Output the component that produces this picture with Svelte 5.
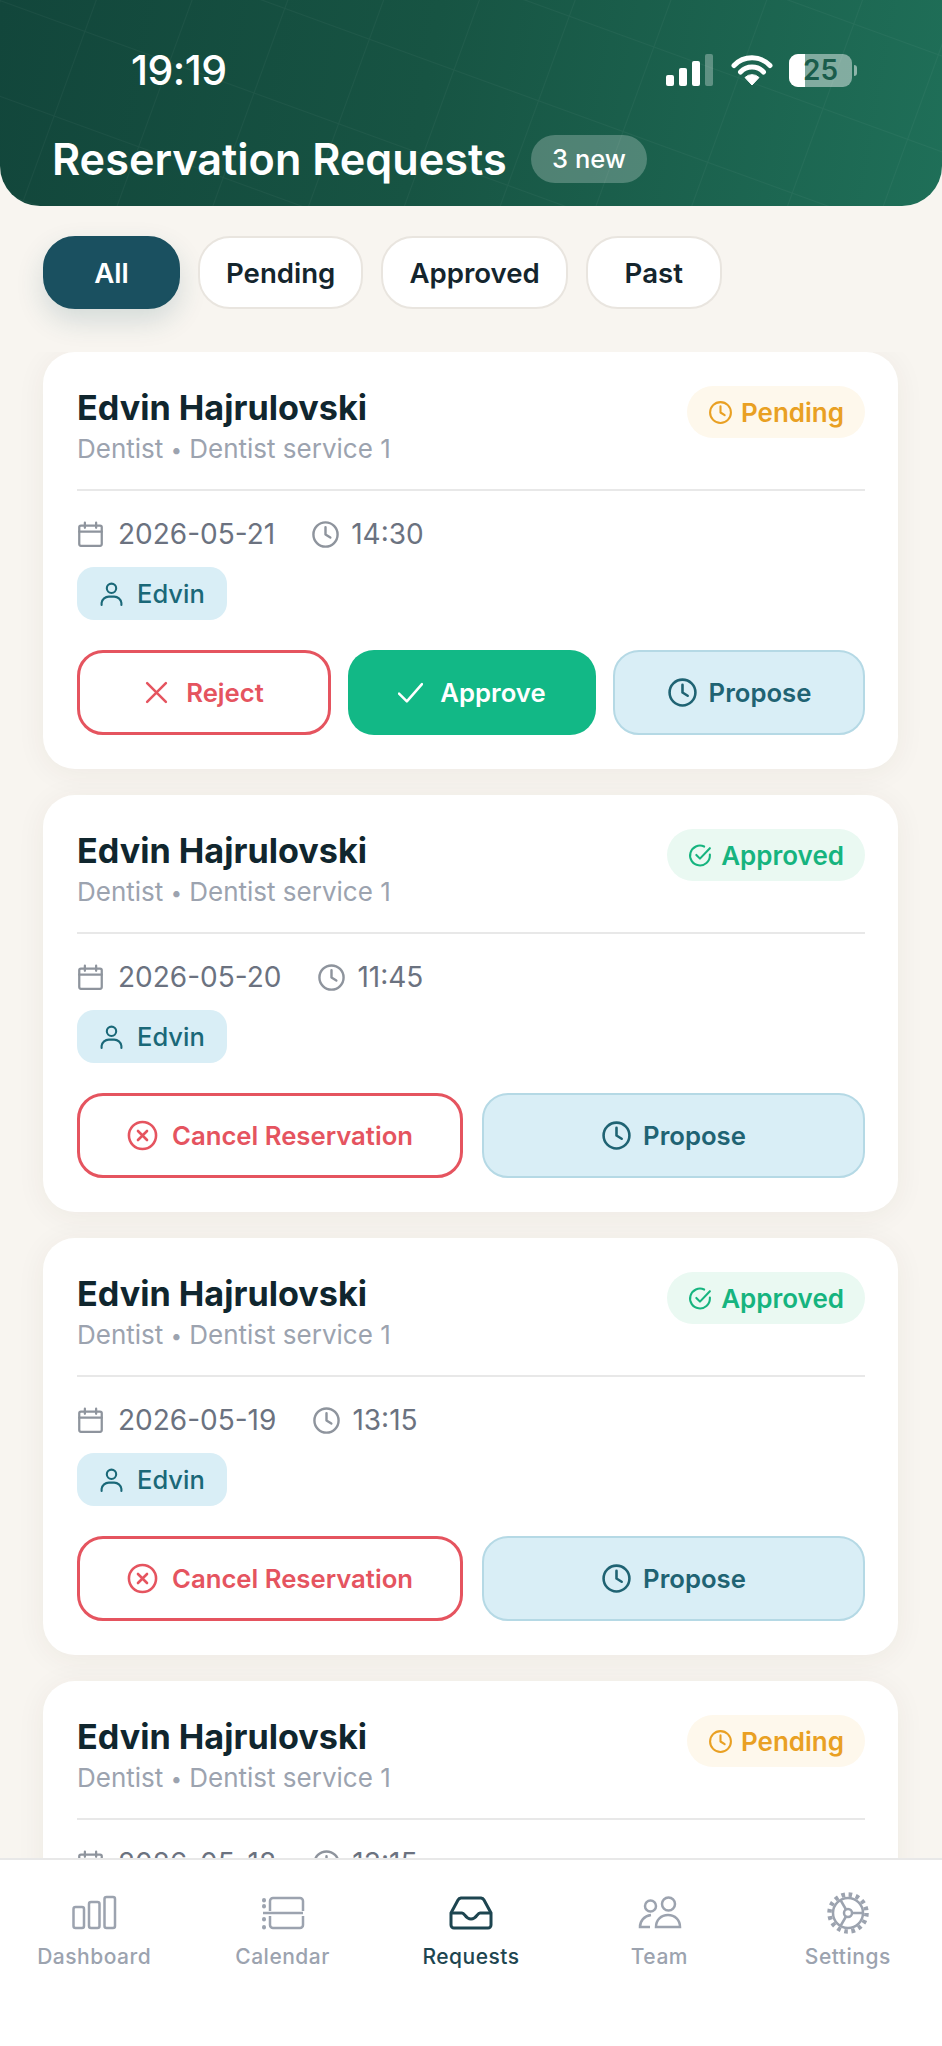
<script>
  const filters = ['All', 'Pending', 'Approved', 'Past'];

  const requests = [
    { status: 'Pending', date: '2026-05-21', time: '14:30' },
    { status: 'Approved', date: '2026-05-20', time: '11:45' },
    { status: 'Approved', date: '2026-05-19', time: '13:15' },
    { status: 'Pending', date: '2026-05-18', time: '13:15' }
  ];

  const tabs = ['Dashboard', 'Calendar', 'Requests', 'Team', 'Settings'];
</script>

{#snippet clock()}
  <svg class="ico" viewBox="0 0 24 24"><circle cx="12" cy="12" r="10" /><path d="M12 6v6l4 2.5" /></svg>
{/snippet}

<div class="screen">
  <header class="top">
    <svg class="grid" width="100%" height="100%">
      <defs>
        <pattern id="lines" width="90" height="90" patternUnits="userSpaceOnUse" patternTransform="rotate(20)">
          <path d="M0 0V90M0 0H90" fill="none" stroke="#fff" stroke-opacity="0.04" stroke-width="2" />
        </pattern>
      </defs>
      <rect width="100%" height="100%" fill="url(#lines)" />
    </svg>
    <div class="status">
      <span class="clocktime">19:19</span>
      <div class="status-icons">
        <svg width="48" height="32" viewBox="0 0 48 32">
          <rect x="0" y="21" width="8" height="11" rx="2" fill="#fff" />
          <rect x="13" y="14" width="8" height="18" rx="2" fill="#fff" />
          <rect x="26" y="7" width="8" height="25" rx="2" fill="#fff" />
          <rect x="39" y="0" width="8" height="32" rx="2" fill="#fff" fill-opacity="0.3" />
        </svg>
        <svg width="42" height="32" viewBox="0 0 42 32">
          <path d="M3 11.5a25 25 0 0 1 36 0M9.5 18a16 16 0 0 1 23 0" fill="none" stroke="#fff" stroke-width="5" stroke-linecap="round" />
          <path d="M21 31l-7-7.5a10 10 0 0 1 14 0z" fill="#fff" stroke="#fff" stroke-linejoin="round" />
        </svg>
        <div class="battery">
          <div class="cell"><i></i><span>25</span></div>
          <b></b>
        </div>
      </div>
    </div>
    <div class="title-row">
      <h1>Reservation Requests</h1>
      <span class="new">3 new</span>
    </div>
  </header>

  <div class="filters">
    {#each filters as f, i}
      <button class="pill" class:on={i === 0}>{f}</button>
    {/each}
  </div>

  <div class="list">
    {#each requests as r}
      <article class="card">
        <div class="card-head">
          <div>
            <h2>Edvin Hajrulovski</h2>
            <p>Dentist <span class="dot">•</span> Dentist service 1</p>
          </div>
          <span class="badge {r.status.toLowerCase()}">
            {#if r.status === 'Pending'}
              {@render clock()}
            {:else}
              <svg class="ico" viewBox="0 0 24 24"><path d="M21 11v1a9.5 9.5 0 1 1-5.5-8.6" /><path d="M8 11.5l3.5 3.5L21 5" /></svg>
            {/if}
            {r.status}
          </span>
        </div>
        <div class="meta">
          <svg class="ico cal" viewBox="0 0 24 24"><rect x="2" y="4" width="20" height="18" rx="1.5" /><path d="M2 9.5h20M7 1.5V6M17 1.5V6" /></svg>
          <span class="date">{r.date}</span>
          <span class="time-ico">{@render clock()}</span>
          <span>{r.time}</span>
        </div>
        <span class="tag">
          <svg class="ico" viewBox="0 0 24 24"><circle cx="12" cy="7" r="4.5" /><path d="M2.5 23v-2a7 7 0 0 1 7-6h5a7 7 0 0 1 7 6v2" /></svg>
          Edvin
        </span>
        <div class="actions" class:two={r.status === 'Approved'}>
          {#if r.status === 'Pending'}
            <button class="btn danger wide">
              <svg class="ico small" viewBox="0 0 24 24"><path d="M3 3l18 18M21 3L3 21" /></svg>
              Reject
            </button>
            <button class="btn ok wide">
              <svg class="ico small" viewBox="0 0 24 24"><path d="M1 13l7.5 7.500L23 4" /></svg>
              Approve
            </button>
          {:else}
            <button class="btn danger">
              <svg class="ico" viewBox="0 0 24 24"><circle cx="12" cy="12" r="10.5" /><path d="M8.5 8.5l7 7M15.5 8.5l-7 7" /></svg>
              Cancel Reservation
            </button>
          {/if}
          <button class="btn soft">{@render clock()} Propose</button>
        </div>
      </article>
    {/each}
  </div>

  <nav class="tabs">
    {#each tabs as t, i}
      <div class="tab" class:active={i === 2}>
        <svg class="tab-ico" viewBox="0 0 44 44">
          {#if i === 0}
            <rect x="1.500" y="15" width="10.500" height="21" rx="2" /><rect x="17" y="10" width="10.500" height="26" rx="2" /><rect x="32.500" y="5" width="10.500" height="31" rx="2" />
          {:else if i === 1}
            <path d="M9 19V9a3 3 0 0 1 3-3h27a3 3 0 0 1 3 3v10M9 24v9a3 3 0 0 0 3 3h27a3 3 0 0 0 3-3v-9M2 21h40" />
            <path d="M3 8v.5M3 14v.5M3 27v.5M3 35v.5" stroke-width="4" stroke-linecap="round" />
          {:else if i === 2}
            <path d="M2 21L9 8a4 4 0 0 1 3-2h20a4 4 0 0 1 3 2l7 13v12a3 3 0 0 1-3 3H5a3 3 0 0 1-3-3z" />
            <path d="M2 21h11c3 0 3 6 9 6s6-6 9-6h11" />
          {:else if i === 3}
            <circle cx="13.500" cy="14" r="5.500" /><circle cx="31.500" cy="12" r="6.500" />
            <path d="M13 35H3c0-6 4-11 11-12M19 35c0-7 5-12 12-12s12 5 12 12z" />
          {:else}
            <circle cx="22" cy="21" r="15" />
            <circle cx="22" cy="21" r="18.500" class="teeth" />
            <circle cx="22" cy="21" r="4" />
            <path d="M26 21h11M20 24.500l-5.500 9.500M20 17.500l-5.500-9.500" />
          {/if}
        </svg>
        <span>{t}</span>
      </div>
    {/each}
  </nav>
</div>

<style>
  :global(body) {
    background: #f8f5f0;
    font-family: Inter, "Liberation Sans", sans-serif;
  }

  .screen {
    width: 942px;
    height: 2046px;
    display: flex;
    flex-direction: column;
    overflow: hidden;
    background: #f8f5f0;
  }

  .top {
    position: relative;
    height: 206px;
    flex: none;
    box-sizing: border-box;
    padding: 50px 52px 0;
    color: #fff;
    background: linear-gradient(100deg, #12463b 0%, #175443 45%, #1f6f58 100%);
    border-radius: 0 0 40px 40px;
    overflow: hidden;
  }

  .grid {
    position: absolute;
    inset: 0;
  }

  .status {
    position: relative;
    display: flex;
    justify-content: space-between;
    align-items: center;
    height: 40px;
    padding-left: 79px;
  }

  .clocktime {
    font-size: 41px;
    font-weight: 500;
    letter-spacing: -0.5px;
  }

  .status-icons {
    display: flex;
    align-items: center;
    gap: 17px;
    margin-right: 33px;
  }

  .battery {
    display: flex;
    align-items: center;
    gap: 2px;
    margin-left: -1px;
  }

  .cell {
    position: relative;
    width: 63px;
    height: 33px;
    border-radius: 9px;
    overflow: hidden;
    background: rgba(255, 255, 255, 0.45);
    color: #1a5c4b;
    font-size: 28px;
    font-weight: 600;
    text-align: center;
    line-height: 33px;
  }

  .cell i {
    position: absolute;
    left: 0;
    top: 0;
    bottom: 0;
    width: 16px;
    background: #fff;
  }

  .cell span {
    position: relative;
  }

  .battery b {
    width: 3px;
    height: 11px;
    border-radius: 0 3px 3px 0;
    background: rgba(255, 255, 255, 0.5);
  }

  .title-row {
    position: relative;
    display: flex;
    align-items: center;
    gap: 24px;
    margin-top: 44px;
  }

  h1 {
    margin: 0;
    font-size: 43.200px;
    font-weight: 600;
    line-height: 50px;
  }

  .new {
    height: 48px;
    padding: 0 21.500px;
    border-radius: 24px;
    background: rgba(255, 255, 255, 0.24);
    font-size: 25.500px;
    font-weight: 500;
    line-height: 48px;
  }

  .filters {
    display: flex;
    gap: 18px;
    padding: 30px 43px 43px;
    flex: none;
  }

  .pill {
    height: 73px;
    min-width: 136px;
    padding: 0 26px;
    border: 2px solid #e9e5df;
    border-radius: 32px;
    background: #fff;
    color: #14252d;
    font: 600 27.600px Inter, "Liberation Sans", sans-serif;
  }

  .pill.on {
    min-width: 137px;
    border-color: #1a5060;
    background: #1a5060;
    color: #fff;
    box-shadow: 0 12px 28px rgba(26, 80, 96, 0.16);
  }

  .list {
    flex: 1;
    min-height: 0;
    overflow: hidden;
    display: flex;
    flex-direction: column;
    gap: 26px;
    padding: 0 44px 0 43px;
  }

  .card {
    flex: none;
    height: 417px;
    box-sizing: border-box;
    padding: 34px 33px 33px 34px;
    display: flex;
    flex-direction: column;
    align-items: flex-start;
    background: #fff;
    border-radius: 32px;
    box-shadow: 0 4px 30px rgba(60, 50, 30, 0.06);
  }

  .card-head {
    width: 100%;
    height: 103px;
    flex: none;
    display: flex;
    justify-content: space-between;
    align-items: flex-start;
    border-bottom: 2px solid #e8e8e8;
  }

  h2 {
    margin: 0;
    color: #10262e;
    font-size: 34.200px;
    font-weight: 700;
    line-height: 44px;
  }

  .card-head p {
    margin: 0;
    color: #9ca3af;
    font-size: 26px;
    line-height: 38px;
  }

  .dot {
    font-size: 20px;
    vertical-align: 1px;
  }

  .badge {
    display: flex;
    align-items: center;
    gap: 8px;
    height: 52px;
    padding: 0 21px;
    border-radius: 26px;
    font-size: 26px;
    font-weight: 600;
  }

  .badge.pending {
    background: #fef8ec;
    color: #e9a023;
  }

  .badge.approved {
    background: #eaf9f2;
    color: #16b47f;
  }

  .ico {
    width: 25px;
    height: 25px;
    flex: none;
    fill: none;
    stroke: currentColor;
    stroke-width: 2;
    stroke-linecap: round;
    stroke-linejoin: round;
  }

  .meta {
    display: flex;
    align-items: center;
    margin-top: 25px;
    height: 36px;
    color: #6b7280;
    font-size: 28px;
  }

  .meta .ico {
    width: 27px;
    height: 27px;
    color: #8e949d;
  }

  .meta .time-ico .ico {
    width: 29px;
    height: 29px;
  }

  .cal {
    margin-right: 14px;
  }

  .date {
    margin-right: 36px;
  }

  .time-ico {
    display: flex;
    margin-right: 11px;
  }

  .tag {
    display: flex;
    align-items: center;
    gap: 13px;
    height: 53px;
    margin-top: 15px;
    padding: 0 22px;
    box-sizing: border-box;
    border-radius: 17px;
    background: #d9eef6;
    color: #1a6878;
    font-size: 25.500px;
    font-weight: 500;
  }

  .tag .ico {
    width: 25px;
    height: 25px;
  }

  .actions {
    width: 100%;
    display: grid;
    grid-template-columns: 254px 248px 252px;
    gap: 17px;
    margin-top: 30px;
  }

  .actions.two {
    grid-template-columns: 386px 383px;
    gap: 19px;
  }

  .btn {
    display: flex;
    align-items: center;
    justify-content: center;
    gap: 14px;
    height: 85px;
    border-radius: 26px;
    border: 2px solid transparent;
    font: 600 25.700px Inter, "Liberation Sans", sans-serif;
  }

  .btn.wide {
    gap: 17px;
  }

  .btn .ico {
    width: 31px;
    height: 31px;
  }

  .btn .ico.small {
    width: 25px;
    height: 25px;
    stroke-width: 2.400;
  }

  .danger {
    border: 3px solid #e5545f;
    background: #fff;
    color: #e5545f;
  }

  .ok {
    background: #12b886;
    color: #fff;
  }

  .soft {
    gap: 11px;
    border-color: #b5d9e5;
    background: #d9eef6;
    color: #1f6373;
  }

  .tabs {
    flex: none;
    height: 186px;
    display: grid;
    grid-template-columns: repeat(5, 1fr);
    border-top: 2px solid #e8e8e8;
    background: #fff;
  }

  .tab {
    display: flex;
    flex-direction: column;
    align-items: center;
    padding-top: 32px;
    color: #9ca3af;
    font-size: 21px;
    font-weight: 500;
    letter-spacing: 0.5px;
  }

  .tab.active {
    color: #1d4550;
  }

  .tab-ico {
    width: 44px;
    height: 44px;
    margin-bottom: 8px;
    overflow: visible;
    fill: none;
    stroke: currentColor;
    stroke-width: 2.500;
  }

  .tab.active .tab-ico {
    stroke-width: 3;
  }

  .teeth {
    stroke-width: 4.500;
    stroke-dasharray: 3.600 3.670;
  }
</style>
